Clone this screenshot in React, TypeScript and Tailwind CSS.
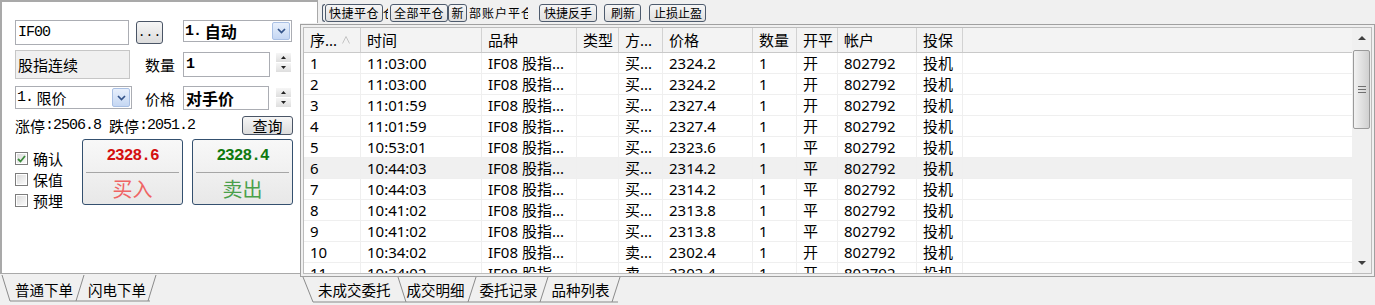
import React from "react";

const SANS = "font-['Noto_Sans','Noto_Sans_CJK_SC',sans-serif]";
const CJK = "font-['Noto_Sans_CJK_SC',sans-serif]";
const MONO = "font-['Liberation_Mono','Noto_Sans_CJK_SC',monospace]";

function Chevron() {
  return (
    <svg width="9" height="6" viewBox="0 0 9 6">
      <path d="M1 1 L4.5 4.5 L8 1" fill="none" stroke="#34548a" strokeWidth="1.7" />
    </svg>
  );
}

function DropBtn() {
  return (
    <div className="w-[18px] self-stretch m-[1px] rounded-[2px] border border-[#a9c0e4] bg-linear-to-b from-[#e8f0fc] to-[#c5d7f3] flex items-center justify-center">
      <Chevron />
    </div>
  );
}

function Spin() {
  return (
    <div className="flex flex-col gap-[1px] w-[15px]">
      <div className="h-[9px] bg-linear-to-b from-[#f6f6f6] to-[#dedede] flex items-center justify-center">
        <svg width="5" height="3" viewBox="0 0 5 3">
          <path d="M0 3 L2.5 0 L5 3Z" fill="#222" />
        </svg>
      </div>
      <div className="h-[9px] bg-linear-to-b from-[#f6f6f6] to-[#dedede] flex items-center justify-center">
        <svg width="5" height="3" viewBox="0 0 5 3">
          <path d="M0 0 L2.5 3 L5 0Z" fill="#222" />
        </svg>
      </div>
    </div>
  );
}

function Check({ checked, label }: { checked?: boolean; label: string }) {
  return (
    <div className="h-[21px] flex items-center">
      <div className="w-[13px] h-[13px] border border-[#7d7d7d] bg-white p-[1px]">
        <div className="w-full h-full bg-linear-to-br from-[#dcdcdc] to-[#fafafa] flex items-center justify-center">
          {checked && (
            <svg width="9" height="8" viewBox="0 0 9 8">
              <path d="M1 4 L3.5 6.5 L8 1" fill="none" stroke="#3d8a3d" strokeWidth="1.8" />
            </svg>
          )}
        </div>
      </div>
      <span className={`ml-[5px] text-[15px] leading-none ${CJK}`}>{label}</span>
    </div>
  );
}

function TradeBtn({ price, label, priceColor, labelColor }: { price: string; label: string; priceColor: string; labelColor: string }) {
  return (
    <div className="w-[101px] h-[66px] rounded-[3px] border border-[#34506f] bg-linear-to-b from-[#f8f8f8] to-[#e8e8e8] flex flex-col px-[3px]">
      <div className={`h-[32px] flex items-center justify-center font-bold text-[16px] tracking-[-0.9px] leading-none ${MONO} ${priceColor}`}>{price}</div>
      <div className="h-px bg-[#a6a6a6]" />
      <div className={`flex-1 flex items-center justify-center text-[20px] leading-none ${CJK} ${labelColor}`}>{label}</div>
    </div>
  );
}

function LeftPanel() {
  return (
    <div className="h-[274px] bg-white border-t-2 border-l-2 border-b border-[#a9a9a9] flex flex-col pl-[13px] pt-[18px] text-black">
      <div className="flex items-start h-[25px]">
        <div className={`w-[114px] h-[25px] border border-[#abadb3] flex items-center pl-[2px] text-[15px] tracking-[-1px] leading-none ${MONO}`}>IF00</div>
        <div className="ml-[7px] mt-[1px] w-[27px] h-[23px] rounded-[3px] border border-[#4a5566] bg-linear-to-b from-[#f6f6f6] to-[#dcdcdc] flex items-end justify-center pb-[4px]">
          <span className={`text-[13px] leading-none ${MONO}`}>...</span>
        </div>
        <div className="ml-[20px] w-[109px] h-[22px] border border-[#abadb3] bg-white flex items-center">
          <span className="flex-1 pl-[1px] flex items-center leading-none">
            <span className={`font-bold text-[15px] tracking-[-1px] ${MONO}`}>1.</span>
            <span className={`font-bold text-[16px] whitespace-pre ${CJK}`}> 自动</span>
          </span>
          <DropBtn />
        </div>
      </div>
      <div className="mt-[5px] flex items-start h-[29px]">
        <div className={`w-[115px] h-[29px] bg-[#f0f0f0] border border-[#c6c6c6] flex items-center pl-[2px] text-[15px] leading-none ${CJK}`}>股指连续</div>
        <div className={`ml-[15px] w-[38px] h-full flex items-center text-[15px] leading-none ${CJK}`}>数量</div>
        <div className={`w-[87px] h-[25px] mt-[2px] border border-[#abadb3] flex items-center pl-[2px] font-bold text-[15px] leading-none ${MONO}`}>1</div>
        <div className="ml-[6px] mt-[3px]">
          <Spin />
        </div>
      </div>
      <div className="mt-[7px] flex items-start h-[24px]">
        <div className="w-[117px] h-[23px] border border-[#abadb3] bg-white flex items-center">
          <span className="flex-1 pl-[1px] flex items-center leading-none">
            <span className={`text-[15px] tracking-[-1px] ${MONO}`}>1.</span>
            <span className={`text-[15px] whitespace-pre ${CJK}`}> 限价</span>
          </span>
          <DropBtn />
        </div>
        <div className={`ml-[13px] w-[38px] h-full flex items-center text-[15px] leading-none ${CJK}`}>价格</div>
        <div className={`w-[86px] h-[24px] border border-[#abadb3] flex items-center pl-[2px] font-bold text-[16px] leading-none ${CJK}`}>对手价</div>
        <div className="ml-[7px] mt-[2px]">
          <Spin />
        </div>
      </div>
      <div className="mt-[6px] flex items-center h-[19px]">
        <div className="w-[227px] flex items-center leading-none whitespace-pre">
          <span className={`text-[15px] ${CJK}`}>涨停</span>
          <span className={`text-[15px] tracking-[-1px] ${MONO}`}>:2506.8 </span>
          <span className={`text-[15px] ${CJK}`}>跌停</span>
          <span className={`text-[15px] tracking-[-1px] ${MONO}`}>:2051.2</span>
        </div>
        <div className={`w-[51px] h-[19px] rounded-[3px] border border-[#4a5566] bg-linear-to-b from-[#f6f6f6] to-[#dcdcdc] flex items-center justify-center text-[15px] leading-none ${CJK}`}>查询</div>
      </div>
      <div className="mt-[4px] flex items-start">
        <div className="w-[67px] pt-[9px] flex flex-col">
          <Check checked label="确认" />
          <Check label="保值" />
          <Check label="预埋" />
        </div>
        <TradeBtn price="2328.6" label="买入" priceColor="text-[#d41010]" labelColor="text-[#ef6464]" />
        <div className="ml-[9px]">
          <TradeBtn price="2328.4" label="卖出" priceColor="text-[#0f7a0f]" labelColor="text-[#4aa04a]" />
        </div>
      </div>
    </div>
  );
}

function LeftTabs() {
  return (
    <div className="relative h-[31px] flex items-center pt-[1px]">
      <svg className="absolute inset-0 pointer-events-none" width="300" height="31" viewBox="0 0 300 31">
        <polyline points="2,1 10,27 150,27" fill="none" stroke="#8a8a8a" strokeWidth="1" />
        <polyline points="76,27 84,1" fill="none" stroke="#8a8a8a" strokeWidth="1" />
        <polyline points="148,27 156,1" fill="none" stroke="#8a8a8a" strokeWidth="1" />
      </svg>
      <span className={`relative ml-[15px] text-[14.5px] leading-none ${CJK}`}>普通下单</span>
      <span className={`relative ml-[15px] text-[14.5px] leading-none ${CJK}`}>闪电下单</span>
    </div>
  );
}

const TBTN = "h-[18px] rounded-[3px] border border-[#4e5b6d] bg-linear-to-b from-[#f6f6f6] to-[#e0e0e0] flex items-center overflow-hidden whitespace-nowrap text-[12px] leading-none font-['Noto_Sans_CJK_SC',sans-serif]";

function Toolbar() {
  return (
    <div className="h-[24px] flex items-start">
      <div className="w-[18px] h-[23px] bg-white border-t-2 border-r border-[#a9a9a9]" />
      <div className="mt-[4px] ml-[4px] w-[3px] h-[18px] border-l border-y border-[#4e5b6d] rounded-l-[3px]" />
      <div className={`mt-[4px] w-[58px] pl-[3px] tracking-[0.5px] ${TBTN}`}>快捷平仓</div>
      <div className="mt-[4px] w-[5px] h-[18px] overflow-hidden flex items-center">
        <span className="text-[12px] leading-none whitespace-nowrap font-['Noto_Sans_CJK_SC',sans-serif]">仓</span>
      </div>
      <div className={`mt-[4px] ml-[2px] w-[58px] pl-[3px] tracking-[0.5px] ${TBTN}`}>全部平仓</div>
      <div className={`mt-[4px] w-[19px] justify-center ${TBTN}`}>新</div>
      <div className="mt-[4px] w-[61px] h-[18px] overflow-hidden flex items-center">
        <span className="ml-[2px] text-[12px] tracking-[1px] leading-none whitespace-nowrap font-['Noto_Sans_CJK_SC',sans-serif]">部账户平仓</span>
      </div>
      <div className={`mt-[4px] ml-[11px] w-[58px] pl-[4px] ${TBTN}`}>快捷反手</div>
      <div className={`mt-[4px] ml-[7px] w-[37px] pl-[6px] ${TBTN}`}>刷新</div>
      <div className={`mt-[4px] ml-[8px] w-[57px] pl-[4px] ${TBTN}`}>止损止盈</div>
    </div>
  );
}

const COLS = [
  { w: "w-[57px]", h: "序..." },
  { w: "w-[121px]", h: "时间" },
  { w: "w-[95px]", h: "品种" },
  { w: "w-[42px]", h: "类型" },
  { w: "w-[44px]", h: "方..." },
  { w: "w-[90px]", h: "价格" },
  { w: "w-[44px]", h: "数量" },
  { w: "w-[41px]", h: "开平" },
  { w: "w-[79px]", h: "帐户" },
  { w: "w-[46px]", h: "投保" },
];

const ROWS: string[][] = [
  ["1", "11:03:00", "IF08 股指...", "", "买...", "2324.2", "1", "开", "802792", "投机"],
  ["2", "11:03:00", "IF08 股指...", "", "买...", "2324.2", "1", "开", "802792", "投机"],
  ["3", "11:01:59", "IF08 股指...", "", "买...", "2327.4", "1", "开", "802792", "投机"],
  ["4", "11:01:59", "IF08 股指...", "", "买...", "2327.4", "1", "开", "802792", "投机"],
  ["5", "10:53:01", "IF08 股指...", "", "买...", "2323.6", "1", "平", "802792", "投机"],
  ["6", "10:44:03", "IF08 股指...", "", "买...", "2314.2", "1", "平", "802792", "投机"],
  ["7", "10:44:03", "IF08 股指...", "", "买...", "2314.2", "1", "平", "802792", "投机"],
  ["8", "10:41:02", "IF08 股指...", "", "买...", "2313.8", "1", "平", "802792", "投机"],
  ["9", "10:41:02", "IF08 股指...", "", "买...", "2313.8", "1", "平", "802792", "投机"],
  ["10", "10:34:02", "IF08 股指...", "", "卖...", "2302.4", "1", "开", "802792", "投机"],
  ["11", "10:34:02", "IF08 股指...", "", "卖...", "2302.4", "1", "开", "802792", "投机"],
];

function Grid() {
  return (
    <div className="h-[253px] border border-[#a0a0a0] p-[2px] bg-[#f0f0f0]">
      <div className="h-full border border-[#bcbcbc] bg-white flex overflow-hidden">
        <div className={`flex-1 flex flex-col overflow-hidden text-[15px] ${SANS}`}>
          <div className="h-[25px] shrink-0 flex bg-[#f3f3f3] border-b border-[#c9c9c9]">
            {COLS.map((c, i) => (
              <div key={i} className={`${c.w} h-full shrink-0 border-r border-[#d2d2d2] pl-[6px] flex items-center leading-none relative`}>
                {c.h}
                {i === 0 && (
                  <svg className="absolute left-[38px] top-[8px]" width="8" height="8" viewBox="0 0 8 8">
                    <path d="M0.5 7.5 L4 0.5 L7.5 7.5" fill="none" stroke="#c4c4c4" strokeWidth="1" />
                  </svg>
                )}
              </div>
            ))}
            <div className="flex-1" />
          </div>
          {ROWS.map((r, ri) => (
            <div key={ri} className={`h-[21px] shrink-0 flex border-b border-[#efefef] ${ri === 5 ? "bg-[#f0f0f0]" : ""}`}>
              {COLS.map((c, ci) => (
                <div key={ci} className={`${c.w} h-full shrink-0 border-r border-[#efefef] pl-[6px] flex items-center leading-none whitespace-nowrap overflow-hidden`}>
                  {r[ci]}
                </div>
              ))}
              <div className="flex-1" />
            </div>
          ))}
        </div>
        <div className="w-[19px] shrink-0 bg-[#f0f0f0] flex flex-col items-center">
          <div className="h-[20px] w-full flex items-center justify-center">
            <svg width="8" height="4" viewBox="0 0 8 4">
              <path d="M0 4 L4 0 L8 4Z" fill="#404040" />
            </svg>
          </div>
          <div className="mt-[2px] w-[17px] h-[79px] rounded-[2px] border border-[#9a9a9a] bg-linear-to-r from-[#f2f2f2] to-[#d0d0d0] flex items-center justify-center">
            <svg width="8" height="7" viewBox="0 0 8 7">
              <path d="M0 0.5 H8 M0 3.5 H8 M0 6.5 H8" stroke="#707070" strokeWidth="1" />
            </svg>
          </div>
          <div className="flex-1" />
          <div className="h-[20px] w-full flex items-center justify-center">
            <svg width="8" height="4" viewBox="0 0 8 4">
              <path d="M0 0 L4 4 L8 0Z" fill="#404040" />
            </svg>
          </div>
        </div>
      </div>
    </div>
  );
}

function RightTabs() {
  return (
    <div className="relative h-[28px] flex items-center pb-[2px]">
      <svg className="absolute inset-0 pointer-events-none" width="400" height="28" viewBox="0 0 400 28">
        <polyline points="3,0 13,25 318,25" fill="none" stroke="#8a8a8a" strokeWidth="1" />
        <polyline points="98,0 106,25" fill="none" stroke="#8a8a8a" strokeWidth="1" />
        <polyline points="168,25 176,0" fill="none" stroke="#8a8a8a" strokeWidth="1" />
        <polyline points="240,25 248,0" fill="none" stroke="#8a8a8a" strokeWidth="1" />
        <polyline points="312,25 320,0" fill="none" stroke="#8a8a8a" strokeWidth="1" />
      </svg>
      <span className={`relative ml-[18px] text-[14.5px] leading-none ${CJK}`}>未成交委托</span>
      <span className={`relative ml-[16px] text-[14.5px] leading-none ${CJK}`}>成交明细</span>
      <span className={`relative ml-[15px] text-[14.5px] leading-none ${CJK}`}>委托记录</span>
      <span className={`relative ml-[14px] text-[14.5px] leading-none ${CJK}`}>品种列表</span>
    </div>
  );
}

export default function App() {
  return (
    <div className={`w-[1375px] h-[305px] bg-[#f0f0f0] flex overflow-hidden text-black ${SANS}`}>
      <div className="w-[300px] shrink-0 flex flex-col">
        <LeftPanel />
        <LeftTabs />
      </div>
      <div className="flex-1 flex flex-col">
        <Toolbar />
        <Grid />
        <RightTabs />
      </div>
    </div>
  );
}
